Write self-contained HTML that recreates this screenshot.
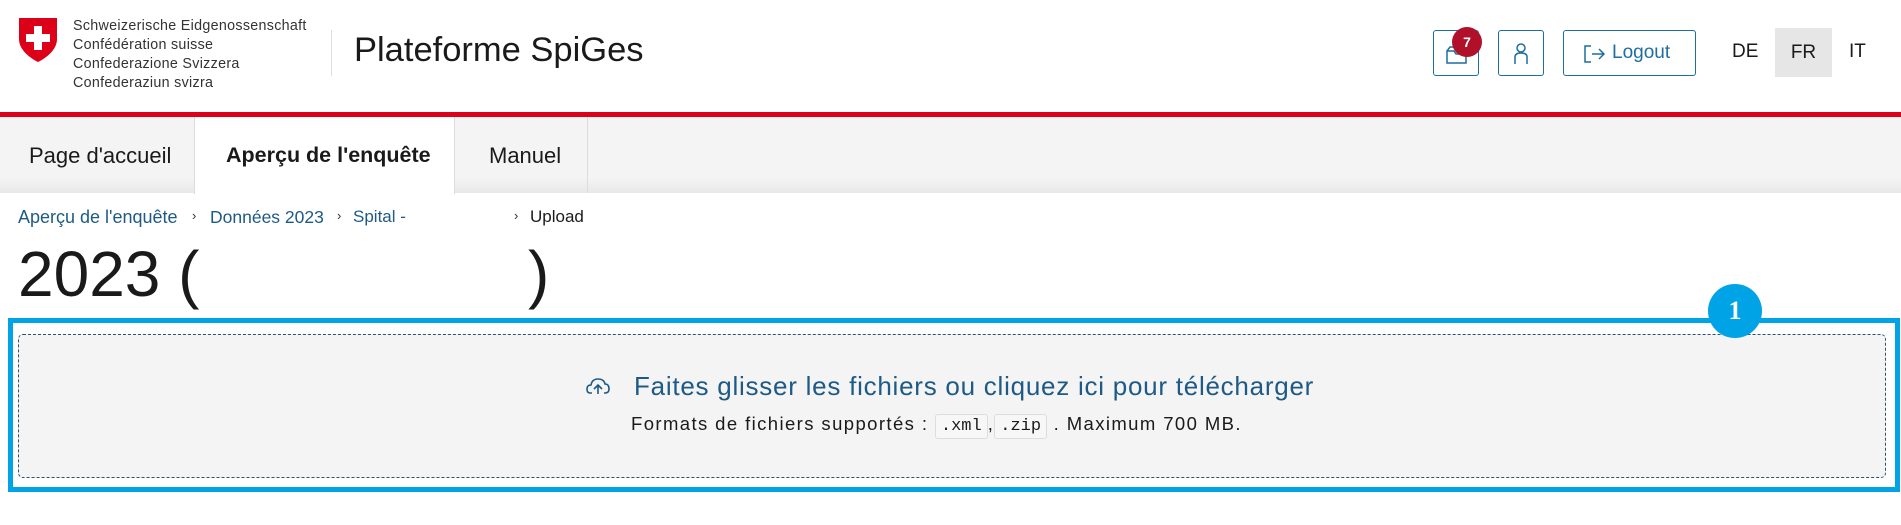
<!DOCTYPE html>
<html><head><meta charset="utf-8"><style>
*{margin:0;padding:0;box-sizing:border-box}
body{width:1901px;height:525px;background:#fff;font-family:"Liberation Sans",sans-serif;position:relative;overflow:hidden;color:#1a1a1a}
.a{position:absolute;white-space:nowrap}
.btn{position:absolute;border:1.5px solid #1e6fa0;border-radius:3px;background:#fff}
code{font-family:'Liberation Mono',monospace;font-size:17px;border:1px solid #ddd;border-radius:3px;padding:2px 5px;background:#f7f7f7;letter-spacing:0}
</style></head><body>
<svg class="a" style="left:18px;top:17px" width="40" height="45" viewBox="0 0 40 45">
<path d="M1 1 H39 V22 C39 33 28 41 20 45 C12 41 1 33 1 22 Z" fill="#dc0018"/>
<path d="M16 9 H24 V17 H32 V25 H24 V33 H16 V25 H8 V17 H16 Z" fill="#fff"/>
</svg>
<div class="a" style="left:73px;top:17px;font-size:14.3px;line-height:19px;color:#333;letter-spacing:0.3px">Schweizerische Eidgenossenschaft<br>Confédération suisse<br>Confederazione Svizzera<br>Confederaziun svizra</div>
<div class="a" style="left:331px;top:30px;width:1px;height:46px;background:#ddd"></div>
<div class="a" style="left:354px;top:31px;font-size:34.5px;color:#1a1a1a">Plateforme SpiGes</div>

<div class="btn" style="left:1433px;top:30px;width:46px;height:46px">
<svg style="position:absolute;left:12px;top:15px" width="22" height="18" viewBox="0 0 22 18" fill="none" stroke="#1e6fa0" stroke-width="1.5"><path d="M1 5 H8 L10 8 H20 V17 H1 Z M1 5 L4 1 H18 L20 8"/></svg>
</div>
<div class="a" style="left:1452px;top:27px;width:30px;height:30px;border-radius:50%;background:#b0102a;color:#fff;font-weight:bold;font-size:14px;text-align:center;line-height:30px">7</div>
<div class="btn" style="left:1498px;top:30px;width:46px;height:46px">
<svg style="position:absolute;left:12px;top:12px" width="20" height="22" viewBox="0 0 20 22" fill="none" stroke="#1e6fa0" stroke-width="1.5"><circle cx="10" cy="5" r="4"/><path d="M4 21 V14 Q4 10 10 10 Q16 10 16 14 V21"/></svg>
</div>
<div class="btn" style="left:1563px;top:30px;width:133px;height:46px;color:#1e6fa0;font-size:19px">
<svg style="position:absolute;left:20px;top:14px" width="22" height="18" viewBox="0 0 22 18" fill="none" stroke="#1e6fa0" stroke-width="1.5"><path d="M7 1 H1 V17 H7 M8 9 H20 M15 4 L20 9 L15 14"/></svg>
<span style="position:absolute;left:48px;top:11px">Logout</span></div>
<div class="a" style="left:1732px;top:41px;font-size:19px">DE</div>
<div class="a" style="left:1775px;top:28px;width:57px;height:49px;background:#e6e6e6;font-size:19px;text-align:center;line-height:49px">FR</div>
<div class="a" style="left:1849px;top:41px;font-size:19px">IT</div>

<div class="a" style="left:0;top:112px;width:1901px;height:5px;background:#dc0018"></div>
<div class="a" style="left:0;top:117px;width:1901px;height:76px;background:linear-gradient(#f4f4f4 80%,#e8e8e8)"></div>
<div class="a" style="left:194px;top:117px;width:261px;height:77px;background:#fff;border-left:1px solid #ddd;border-right:1px solid #ddd"></div>
<div class="a" style="left:587px;top:117px;width:1px;height:76px;background:#ddd"></div>
<div class="a" style="left:29px;top:143px;font-size:22px">Page d'accueil</div>
<div class="a" style="left:226px;top:143px;font-size:21.5px;font-weight:bold">Aperçu de l'enquête</div>
<div class="a" style="left:489px;top:143px;font-size:22px">Manuel</div>

<div class="a" style="left:18px;top:207px;font-size:18px;color:#1d5a86">Aperçu de l'enquête</div>
<div class="a" style="left:192px;top:208px;font-size:13px;color:#333">›</div>
<div class="a" style="left:210px;top:207px;font-size:17.5px;color:#1d5a86">Données 2023</div>
<div class="a" style="left:337px;top:208px;font-size:13px;color:#333">›</div>
<div class="a" style="left:353px;top:207px;font-size:17px;color:#1d5a86">Spital -</div>
<div class="a" style="left:514px;top:208px;font-size:13px;color:#333">›</div>
<div class="a" style="left:530px;top:207px;font-size:17px">Upload</div>
<div class="a" style="left:18px;top:238px;font-size:64px;line-height:72px">2023 (</div>
<div class="a" style="left:528px;top:238px;font-size:64px;line-height:72px">)</div>

<div class="a" style="left:8px;top:318px;width:1892px;height:174px;border:5px solid #00a3e6"></div>
<div class="a" style="left:18px;top:334px;width:1868px;height:144px;background:#f4f4f4;border:1px dashed #2a5473;border-radius:5px"></div>
<svg class="a" style="left:586px;top:378px" width="24" height="18" viewBox="0 0 24 18" fill="none" stroke="#1d5a86" stroke-width="1.6"><path d="M6 15 H4 Q1 15 1 11 Q1 7 5 7 Q6 1 12 1 Q18 1 19 6 Q23 6 23 11 Q23 15 19 15 H18 M12 16 V8 M8 11 L12 7 L16 11"/></svg>
<div class="a" style="left:634px;top:371px;font-size:26px;color:#1d5a86;letter-spacing:0.75px">Faites glisser les fichiers ou cliquez ici pour télécharger</div>
<div class="a" style="left:631px;top:413px;font-size:18.5px;color:#1a1a1a;letter-spacing:1.4px">Formats de fichiers supportés : <code>.xml</code>,<code>.zip</code> . Maximum 700 MB.</div>
<div class="a" style="left:1708px;top:284px;width:54px;height:54px;border-radius:50%;background:#00a3e6;color:#fff;font-family:'Liberation Serif',serif;font-weight:bold;font-size:26px;text-align:center;line-height:54px">1</div>
</body></html>
